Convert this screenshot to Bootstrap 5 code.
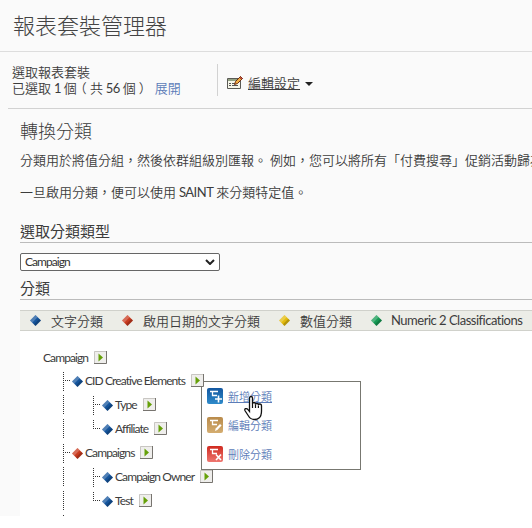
<!DOCTYPE html>
<html lang="zh-Hant">
<head>
<meta charset="utf-8">
<meta name="viewport" content="width=device-width, initial-scale=1">
<title>報表套裝管理器</title>
<link href="https://cdn.jsdelivr.net/npm/bootstrap@5.3.0/dist/css/bootstrap.min.css" rel="stylesheet">
<style>
body{width:532px;height:528px;overflow:hidden;background:#fff;color:#3c3c3c;font:350 13px/16px "Noto Sans CJK TC",sans-serif;white-space:nowrap}
a{color:#5c7cb8}
.page-area{height:516px;background:#fafafa;overflow:hidden}
.page-title{height:52px;border-bottom:1px solid #ddd;padding:7px 0 0 13px;font-size:22px;line-height:34px;font-weight:300;color:#444}
.suite-bar{height:57px;margin-left:8px;border-bottom:1px solid #d2d2d2;padding:12px 0 0 4px}
.suite-info{width:206px;height:32px;border-right:1px solid #d2d2d2}
.expand-link{margin-left:3px}
.open-paren{margin:0 3px 0 -3px}
.latin{font-family:Lato,sans-serif;font-weight:400;letter-spacing:-.5px}
.edit-box{height:39px;margin-top:-1px;padding-left:9px}
.edit-link{color:#3c3c3c}
.caret{border:4px solid transparent;border-top-color:#222;border-bottom:0;margin:3px 0 0 5px}
.content-area{margin-left:20px}
.main-head{font-size:18px;line-height:22px;font-weight:300;margin:10px 0 11px}
.para{height:32px;line-height:16px;margin:0}
.section-head{font-size:15px;line-height:19px;font-weight:400;margin:5px 0 10px;padding-bottom:2px;border-bottom:1px solid #bbb}
.type-select{width:200px;height:18px;border:1px solid #666;border-radius:2px;background:#fff;padding:0 4px;color:#333;margin-bottom:7px}
.type-select,.tree-panel{font:12px/16px Lato,sans-serif;letter-spacing:-.95px}
.legend-bar{height:21px;background:#ecede7;border:1px solid #d0d1cb;border-width:1px 0;line-height:19px;padding-left:10px;gap:19px}
.legend-item{gap:10px}
.legend-item .latin{margin-left:-1px}
.tree-panel{background:#fff;height:185px;padding:15px 0 0 23px;letter-spacing:-.9px}
.tree-row{height:24px;position:relative}
.tree-row.root-row{height:23px}
.level-one{padding-left:20px}
.level-two{padding-left:50px}
.tree-label{margin-left:2px}
.root-row .tree-label{margin-left:0}
.guide{width:9px;height:19px;background:repeating-linear-gradient(90deg,#333 0 1px,transparent 1px 2px) 2px 8px/6px 1px no-repeat,repeating-linear-gradient(#333 0 1px,transparent 1px 2px) 0 0/1px 19px no-repeat}
.guide.last-node{background-size:6px 1px,1px 9px}
.trunk{position:absolute;left:20px;top:2px;width:1px;height:19px;background:repeating-linear-gradient(#333 0 1px,transparent 1px 2px)}
.trunk.stub{top:2px;height:1px}
.go{margin:0 0 1px 6px;position:relative;z-index:3}
.popup{position:absolute;z-index:2;left:201px;top:381px;width:160px;height:89px;background:#fff;border:1px solid #777770;padding-left:5px}
.popup a{height:29px;font-size:11px;gap:5px;position:relative;top:-1px}
.pointer{position:absolute;z-index:4;left:243px;top:395px}
svg{display:block;flex:none}
</style>
<script src="https://cdn.jsdelivr.net/npm/bootstrap@5.3.0/dist/js/bootstrap.bundle.min.js"></script>
</head>
<body>
<svg width="0" height="0" class="position-absolute">
<defs>
<linearGradient id="gb" x2="0" y2="1"><stop stop-color="#1457a0"/><stop offset="1" stop-color="#2e8bca"/></linearGradient>
<linearGradient id="gt" x2="0" y2="1"><stop stop-color="#b98b4b"/><stop offset="1" stop-color="#d4ad70"/></linearGradient>
<linearGradient id="gr" x2="0" y2="1"><stop stop-color="#d02a20"/><stop offset="1" stop-color="#ee7770"/></linearGradient>
<symbol id="dia" viewBox="0 0 10 10"><path d="M5 0 10 5 5 10 0 5Z" fill="currentColor"/><path d="M5 0 7 2 2 7 0 5Z" fill="#fff" opacity=".25"/><path d="M10 5 5 10 3.500 8.500 8.500 3.500Z" opacity=".2"/></symbol>
<symbol id="go" viewBox="0 0 13 13"><path d="M0 0h13v13H0z" fill="#efeeec"/><path d="M.5 13V.5H13" fill="none" stroke="#c8c6c2"/><path d="M12.500 0V12.500H0" fill="none" stroke="#77746f"/><path d="M4.500 2.500 9 6.500 4.500 10.500Z" fill="#65a008"/></symbol>
<symbol id="node" viewBox="0 0 16 16"><path d="M3 3.500h8M5.500 3.500v4H10" fill="none" stroke="#fff" stroke-width="1.300"/></symbol>
</defs>
</svg>
<div class="page-area">
<h1 class="page-title mb-0">報表套裝管理器</h1>
<div class="suite-bar d-flex">
<div class="suite-info"><div>選取報表套裝</div><div class="d-flex"><span>已選取 <span class="latin">1</span> 個<span class="open-paren">（</span>共 <span class="latin">56</span> 個 ）</span><a href="#" class="expand-link text-decoration-none">展開</a></div></div>
<div class="edit-box d-flex align-items-center">
<svg width="17" height="15" viewBox="0 0 17 15"><path d="M.5 3.500h13v10H.5z" fill="#f7f7ea" stroke="#5a5a55"/><path d="M1 4h9v2H1z" fill="#93a283"/><path d="M2 8.500h2m1 0h4M2 10.500h2m1 0h6" stroke="#555"/><path d="m7.500 9.500 1-3 5-5 2 2-5 5Z" fill="#f0ad42" stroke="#6e2c12"/><path d="m12.500 2.500 1-1 2 2-1 1Z" fill="#c44b3b" stroke="#6e2c12" stroke-width=".5"/></svg>
<a class="edit-link ms-1" href="#">編輯設定</a><span class="caret"></span></div>
</div>
<main class="content-area">
<h2 class="main-head">轉換分類</h2>
<p class="para">分類用於將值分組，然後依群組級別匯報。 例如，您可以將所有「付費搜尋」促銷活動歸為</p>
<p class="para">一旦啟用分類，便可以使用 <span class="latin">SAINT</span> 來分類特定值。</p>
<h3 class="section-head">選取分類類型</h3>
<div class="type-select d-flex justify-content-between align-items-center"><span>Campaign</span><svg width="10" height="6" viewBox="0 0 10 6"><path d="m1 1 4 4 4-4" fill="none" stroke="#222" stroke-width="2"/></svg></div>
<h3 class="section-head mt-0">分類</h3>
<div class="legend-bar d-flex">
<div class="legend-item d-flex align-items-center"><svg width="11" height="11" color="#14549c"><use href="#dia"/></svg><span>文字分類</span></div>
<div class="legend-item d-flex align-items-center"><svg width="11" height="11" color="#c93a1e"><use href="#dia"/></svg><span>啟用日期的文字分類</span></div>
<div class="legend-item d-flex align-items-center"><svg width="11" height="11" color="#e3bb0c"><use href="#dia"/></svg><span>數值分類</span></div>
<div class="legend-item d-flex align-items-center"><svg width="11" height="11" color="#159a54"><use href="#dia"/></svg><span class="latin">Numeric 2 Classifications</span></div>
</div>
<div class="tree-panel">
<div class="tree-row root-row d-flex align-items-center"><span class="tree-label">Campaign</span><svg class="go" width="13" height="13"><use href="#go"/></svg></div>
<div class="tree-row level-one d-flex align-items-center"><span class="guide"></span><svg width="11" height="11" color="#14549c"><use href="#dia"/></svg><span class="tree-label">CID Creative Elements</span><svg class="go" width="13" height="13"><use href="#go"/></svg></div>
<div class="tree-row level-two d-flex align-items-center"><span class="trunk"></span><span class="guide"></span><svg width="11" height="11" color="#14549c"><use href="#dia"/></svg><span class="tree-label">Type</span><svg class="go" width="13" height="13"><use href="#go"/></svg></div>
<div class="tree-row level-two d-flex align-items-center"><span class="trunk"></span><span class="guide last-node"></span><svg width="11" height="11" color="#14549c"><use href="#dia"/></svg><span class="tree-label">Affiliate</span><svg class="go" width="13" height="13"><use href="#go"/></svg></div>
<div class="tree-row level-one d-flex align-items-center"><span class="guide"></span><svg width="11" height="11" color="#c93a1e"><use href="#dia"/></svg><span class="tree-label">Campaigns</span><svg class="go" width="13" height="13"><use href="#go"/></svg></div>
<div class="tree-row level-two d-flex align-items-center"><span class="trunk"></span><span class="guide"></span><svg width="11" height="11" color="#14549c"><use href="#dia"/></svg><span class="tree-label">Campaign Owner</span><svg class="go" width="13" height="13"><use href="#go"/></svg></div>
<div class="tree-row level-two d-flex align-items-center"><span class="trunk"></span><span class="guide last-node"></span><svg width="11" height="11" color="#14549c"><use href="#dia"/></svg><span class="tree-label">Test</span><svg class="go" width="13" height="13"><use href="#go"/></svg></div>
<div class="tree-row"><span class="trunk stub"></span></div>
</div>
</main>
</div>
<div class="popup">
<a href="#" class="d-flex align-items-center text-decoration-none"><svg width="16" height="16" viewBox="0 0 16 16"><rect width="16" height="16" rx="2" fill="url(#gb)"/><use href="#node"/><path d="M11.500 7.500v7M8 11h7" stroke="#fff" stroke-width="1.600"/></svg><span class="text-decoration-underline">新增分類</span></a>
<a href="#" class="d-flex align-items-center text-decoration-none"><svg width="16" height="16" viewBox="0 0 16 16"><rect width="16" height="16" rx="2" fill="url(#gt)"/><use href="#node"/><path d="m8 14 .7-2.500L13 7l1.600 1.600-4.300 4.500Z" fill="#fff"/></svg><span>編輯分類</span></a>
<a href="#" class="d-flex align-items-center text-decoration-none"><svg width="16" height="16" viewBox="0 0 16 16"><rect width="16" height="16" rx="2" fill="url(#gr)"/><use href="#node"/><path d="m9 8.500 5 5.500m0-5.500L9 14" stroke="#fff" stroke-width="1.600"/></svg><span>刪除分類</span></a>
</div>
<svg class="pointer" width="20" height="26" viewBox="0 0 20 26"><path d="M6.500 14V3q0-1.500 1.500-1.500T9.500 3v6q0-1.500 1.500-1.500t1.500 2q.3-1.200 1.500-1.200T15.300 10q.4-1 1.500-1 1.700 0 1.700 2v5q0 5-2.500 7-1.500 1.500-4.500 1.500-4 0-6-3.500L2.200 16q-1-1.700.3-2.300 1.500-.5 2.500 1l1.500 1.800Z" fill="#fff" stroke="#111" stroke-width="1.300"/><path d="M9.500 9v4M12.500 9.500V13M15.400 10.500V13" stroke="#111" stroke-width="1.200"/></svg>
</body>
</html>
